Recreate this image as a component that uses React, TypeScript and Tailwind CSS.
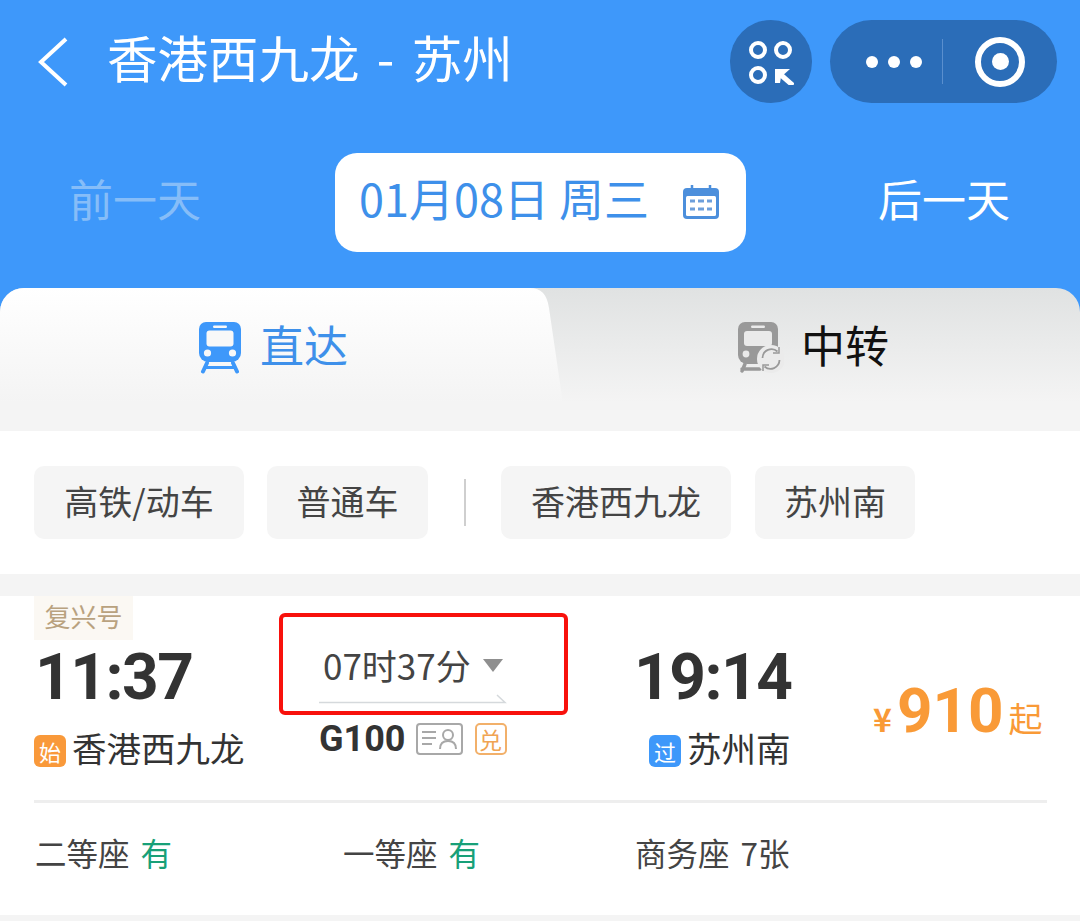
const F = '[font-family:"Noto_Sans_CJK_SC","Noto_Sans",sans-serif]';

function Train({ color, hole }: { color: string; hole: string }) {
  return (
    <svg width="44" height="52" viewBox="0 0 44 52" className="block">
      <path d="M8 0h28a7 7 0 0 1 7 7v24a9 9 0 0 1-9 9H10a9 9 0 0 1-9-9V7a7 7 0 0 1 7-7z" fill={color} />
      <rect x="15" y="3.500" width="14" height="2.500" rx="1.200" fill={hole} />
      <rect x="8.500" y="8.500" width="27" height="16" rx="3" fill={hole} />
      <circle cx="9.500" cy="31" r="3.600" fill={hole} />
      <circle cx="34.500" cy="31" r="3.600" fill={hole} />
      <path d="M9 41l-4 8.500M35 41l4 8.500" stroke={color} strokeWidth="4" strokeLinecap="round" />
      <path d="M8 45.500h28" stroke={color} strokeWidth="3" />
    </svg>
  );
}

function TransferTrain() {
  return (
    <svg width="46" height="52" viewBox="0 0 46 52" className="block">
      <path d="M7 0h26a7 7 0 0 1 7 7v26a9 9 0 0 1-9 9H9a9 9 0 0 1-9-9V7a7 7 0 0 1 7-7z" fill="#999" />
      <rect x="13" y="3.500" width="14" height="2.500" rx="1.200" fill="#eaeaea" />
      <rect x="6" y="9" width="28" height="15" rx="3" fill="#eaeaea" />
      <circle cx="8" cy="32" r="3.400" fill="#eaeaea" />
      <path d="M7 42l-3 7M4 47h18" stroke="#999" strokeWidth="3.500" strokeLinecap="round" />
      <circle cx="33" cy="37" r="14" fill="#ebebeb" />
      <path d="M24.500 36a9 9 0 0 1 15-6.500M41.500 38a9 9 0 0 1-15 6.500" fill="none" stroke="#999" strokeWidth="1.800" />
      <path d="M41 25v6h-6M25 49v-6h6" fill="none" stroke="#999" strokeWidth="1.500" />
    </svg>
  );
}

function Chip({ w, children }: { w: string; children: string }) {
  return (
    <div className={`${w} h-[73px] rounded-[10px] bg-[#f5f5f5] flex items-center justify-center pb-[5px] text-[34px] text-[#444]`}>
      {children}
    </div>
  );
}

export default function App() {
  return (
    <div className={`w-[1080px] h-[921px] overflow-hidden bg-[#f4f4f4] ${F}`}>
      <div className="h-[288px] bg-[#3e98fa] px-[38px] pt-[20px]">
        <div className="flex items-center h-[83px]">
          <svg width="32" height="50" viewBox="0 0 32 50" className="shrink-0 ml-[-1px]">
            <path d="M29 2L4 25l25 23" fill="none" stroke="#fff" strokeWidth="4" />
          </svg>
          <div className="ml-[38px] pb-[10px] text-[50.500px] leading-none text-white whitespace-nowrap [word-spacing:6px]">香港西九龙 - 苏州</div>
          <div className="ml-auto mr-[-15px] flex items-center gap-[18px]">
            <div className="w-[82px] h-[83px] rounded-full bg-[#2b6db8] flex items-center justify-center">
              <svg width="46" height="46" viewBox="0 0 46 46">
                <g fill="none" stroke="#fff" strokeWidth="4">
                  <circle cx="10" cy="11" r="7" />
                  <circle cx="35" cy="11" r="7" />
                  <circle cx="10" cy="36" r="7" />
                </g>
                <path d="M33 36l12 10.500" stroke="#fff" strokeWidth="5" />
                <path d="M27 30h15l-9 8-1 6h-5z" fill="#fff" />
              </svg>
            </div>
            <div className="w-[227px] h-[83px] rounded-[42px] bg-[#2b6db8] flex items-center">
              <div className="ml-[36px] flex items-center gap-[10px]">
                <span className="w-[12px] h-[12px] rounded-full bg-white" />
                <span className="w-[12px] h-[12px] rounded-full bg-white" />
                <span className="w-[12px] h-[12px] rounded-full bg-white" />
              </div>
              <div className="ml-[20px] w-px h-[45px] bg-[#5a8fce]" />
              <div className="ml-[32px] w-[50px] h-[50px] rounded-full border-[6px] border-white flex items-center justify-center">
                <span className="w-[17px] h-[17px] rounded-full bg-white" />
              </div>
            </div>
          </div>
        </div>
        <div className="mt-[50px] flex items-center">
          <div className="ml-[31px] pb-[10px] text-[44px] leading-none text-[#86bdf8]">前一天</div>
          <div className="ml-[134px] w-[411px] h-[99px] rounded-[22px] bg-white flex items-center pl-[24px]">
            <span className="pb-[10px] text-[45px] leading-none text-[#3e90ea] whitespace-nowrap">01月08日 周三</span>
            <svg width="38" height="34" viewBox="0 0 38 34" className="ml-[33px] mb-[2px]">
              <path d="M10 0v4M28 0v4" stroke="#4c8fdc" strokeWidth="2.500" />
              <rect x="1" y="3" width="36" height="31" rx="4" fill="#4c8fdc" />
              <rect x="4" y="11" width="30" height="20" rx="1.500" fill="#fff" />
              <path d="M8 16h5M16 16h6M25 16h5M8 24h5M16 24h6M25 24h5" stroke="#6d9fdb" strokeWidth="3" />
            </svg>
          </div>
          <div className="ml-[132px] pb-[10px] text-[44px] leading-none text-white">后一天</div>
        </div>
      </div>

      <div className="h-[143px] mt-0 bg-[#3e98fa]">
        <div className="relative h-full flex rounded-t-[24px] overflow-hidden bg-[linear-gradient(#e0e2e2,#f4f4f4_80%)]">
          <svg width="40" height="143" viewBox="0 0 40 143" className="absolute left-[530px] top-0">
            <defs>
              <linearGradient id="tabfill" x1="0" y1="0" x2="0" y2="1">
                <stop offset="0" stopColor="#ffffff" />
                <stop offset="0.800" stopColor="#f4f4f4" />
              </linearGradient>
            </defs>
            <path d="M0 0C11 0 17 6 19 20L37 143H0z" fill="url(#tabfill)" />
          </svg>
          <div className="w-[530px] h-full bg-[linear-gradient(#ffffff,#f4f4f4_80%)] flex items-start justify-center pt-[34px] pl-[16px] gap-[18px]">
            <Train color="#3e98fa" hole="#f8f8f8" />
            <span className="text-[44px] leading-[44px] text-[#3e90ea]">直达</span>
          </div>
          <div className="flex-1 h-full flex items-start pt-[34px] pl-[208px] gap-[17px]">
            <TransferTrain />
            <span className="text-[44px] leading-[44px] text-[#111]">中转</span>
          </div>
        </div>
      </div>

      <div className="h-[143px] bg-white px-[34px] pt-[35px] flex items-start gap-[23px]">
        <Chip w="w-[210px]">高铁/动车</Chip>
        <Chip w="w-[161px]">普通车</Chip>
        <div className="w-[2px] h-[47px] mt-[13px] mx-[12.500px] bg-[#cfcfcf]" />
        <Chip w="w-[230px]">香港西九龙</Chip>
        <Chip w="w-[160px] ml-[1px]">苏州南</Chip>
      </div>

      <div className="mt-[22px] h-[319px] bg-white pl-[34px] pr-[33px]">
        <div className="h-[207px] border-b-[3px] border-[#eeeeee] flex items-start">
          <div className="w-[245px]">
            <div className="w-[99px] h-[44px] pb-[5px] bg-[#fbf8f3] flex items-center justify-center text-[26px] text-[#b9a27f]">复兴号</div>
            <div className="mt-[3px] ml-[1px] text-[64px] leading-[70px] font-bold text-[#333] font-['Roboto'] tracking-[-1.500px]">11:37</div>
            <div className="mt-[14px] flex items-center">
              <span className="w-[32px] h-[32px] rounded-[6px] bg-[#f9993a] text-white text-[22px] leading-none flex items-center justify-center">始</span>
              <span className="ml-[6px] pb-[8px] text-[34.500px] leading-[40px] text-[#333] whitespace-nowrap">香港西九龙</span>
            </div>
          </div>
          <div className="w-[355px]">
            <div className="mt-[17px] w-[289px] h-[102px] rounded-[6px] border-[4px] border-[#f8110c] pt-[26px] pl-[40px] relative">
              <div className="flex items-center">
                <span className="text-[35px] leading-[44px] text-[#444] whitespace-nowrap">07时37分</span>
                <span className="ml-[12px] w-0 h-0 border-x-[10px] border-x-transparent border-t-[13px] border-t-[#8f8f8f]" />
              </div>
              <svg width="190" height="10" viewBox="0 0 190 10" className="absolute left-[36px] top-[77px]">
                <path d="M0 8.500h186L178 1" fill="none" stroke="#d5d9dc" strokeWidth="1.500" />
              </svg>
            </div>
            <div className="mt-[3px] ml-[40px] flex items-center">
              <span className="text-[36px] leading-[42px] font-bold text-[#333] font-['Roboto']">G100</span>
              <svg width="47" height="32" viewBox="0 0 47 32" className="ml-[10px]">
                <rect x="1" y="1" width="45" height="30" rx="3" fill="none" stroke="#a8a8a8" strokeWidth="2" />
                <path d="M6 9h14M6 15h14M6 21h10" stroke="#a8a8a8" strokeWidth="2" />
                <circle cx="32" cy="12" r="5" fill="none" stroke="#a8a8a8" strokeWidth="2" />
                <path d="M24 26c0-6 3-8 8-8s8 2 8 8" fill="none" stroke="#a8a8a8" strokeWidth="2" />
              </svg>
              <span className="ml-[12px] w-[32px] h-[32px] rounded-[5px] border-2 border-[#f2b06a] text-[#f0a453] text-[23px] leading-none flex items-center justify-center">兑</span>
            </div>
          </div>
          <div className="w-[239px] mt-[47px]">
            <div className="text-[64px] leading-[70px] font-bold text-[#333] font-['Roboto'] tracking-[-1.500px]">19:14</div>
            <div className="mt-[14px] ml-[15px] flex items-center">
              <span className="w-[32px] h-[32px] rounded-[6px] bg-[#3e98fa] text-white text-[22px] leading-none flex items-center justify-center">过</span>
              <span className="ml-[6px] pb-[8px] text-[34.500px] leading-[40px] text-[#333] whitespace-nowrap">苏州南</span>
            </div>
          </div>
          <div className="mt-[80px] flex items-baseline text-[#f99a37] whitespace-nowrap">
            <span className="text-[32px] leading-none font-bold">¥</span>
            <span className="ml-[5px] text-[62px] leading-[70px] font-bold font-['Roboto']">910</span>
            <span className="ml-[5px] text-[34px] leading-none">起</span>
          </div>
        </div>
        <div className="flex items-center h-[106px] pb-[6px] text-[31.500px] text-[#444] pl-[1px] [word-spacing:4px]">
          <div className="w-[308px]">二等座 <span className="text-[#18a078]">有</span></div>
          <div className="w-[292px]">一等座 <span className="text-[#18a078]">有</span></div>
          <div>商务座 7张</div>
        </div>
      </div>
    </div>
  );
}
